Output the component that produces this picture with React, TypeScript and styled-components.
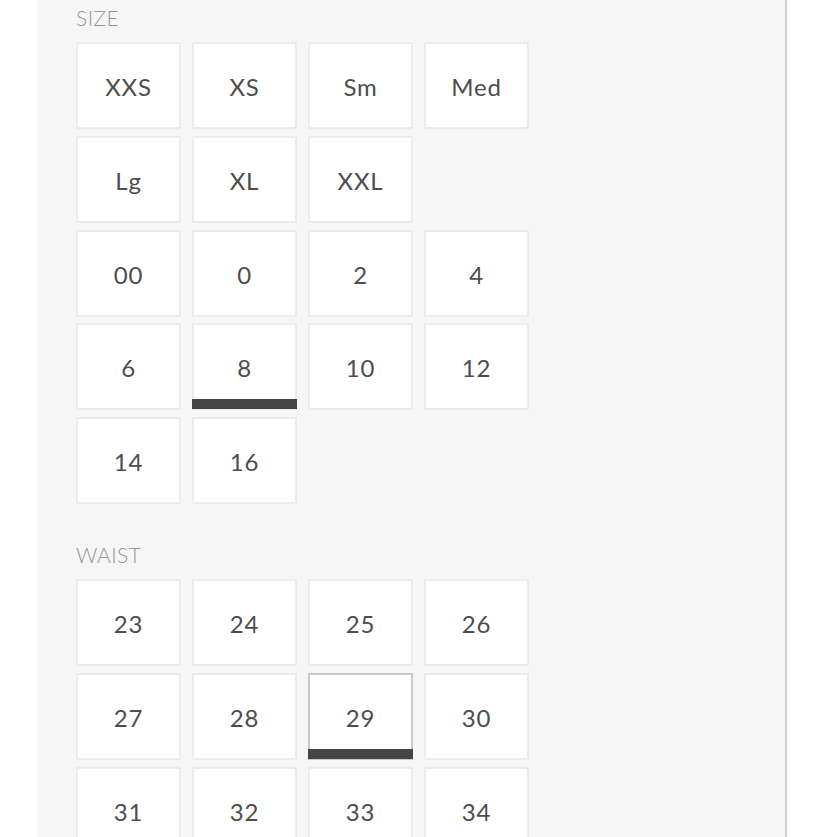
import { createGlobalStyle } from "styled-components";
import styled from "styled-components";

const GlobalStyle = createGlobalStyle`
  html, body {
    margin: 0;
    padding: 0;
    background: #ffffff;
  }
  body {
    font-family: "Lato", "Open Sans", sans-serif;
    overflow: hidden;
  }
`;

type Option = {
  label: string;
  selected?: boolean;
  focused?: boolean;
};

const sizes: Option[] = [
  { label: "XXS" },
  { label: "XS" },
  { label: "Sm" },
  { label: "Med" },
  { label: "Lg" },
  { label: "XL" },
  { label: "XXL" },
  { label: "" },
  { label: "00" },
  { label: "0" },
  { label: "2" },
  { label: "4" },
  { label: "6" },
  { label: "8", selected: true },
  { label: "10" },
  { label: "12" },
  { label: "14" },
  { label: "16" },
];

const waists: Option[] = [
  { label: "23" },
  { label: "24" },
  { label: "25" },
  { label: "26" },
  { label: "27" },
  { label: "28" },
  { label: "29", selected: true, focused: true },
  { label: "30" },
  { label: "31" },
  { label: "32" },
  { label: "33" },
  { label: "34" },
];

const App = () => {
  return (
    <>
      <GlobalStyle />
      <Panel>
        <Section>
          <SectionLabel>Size</SectionLabel>
          <OptionGrid>
            {sizes.map((o, i) =>
              o.label === "" ? (
                <Spacer key={i} />
              ) : (
                <OptionButton key={i} $selected={o.selected} $focused={o.focused}>
                  {o.label}
                </OptionButton>
              )
            )}
          </OptionGrid>
        </Section>
        <Section>
          <SectionLabel>Waist</SectionLabel>
          <OptionGrid>
            {waists.map((o, i) => (
              <OptionButton key={i} $selected={o.selected} $focused={o.focused}>
                {o.label}
              </OptionButton>
            ))}
          </OptionGrid>
        </Section>
      </Panel>
    </>
  );
};

export default App;

const Panel = styled.div`
  margin-left: 37px;
  width: 750px;
  min-height: 837px;
  box-sizing: border-box;
  background: #f6f6f6;
  border-right: 2px solid #cfcfcf;
  padding: 6px 0 0 39px;
  display: flex;
  flex-direction: column;
  gap: 39px;
`;

const Section = styled.div`
  display: flex;
  flex-direction: column;
  gap: 12px;
`;

const SectionLabel = styled.div`
  font-size: 21px;
  line-height: 24px;
  font-weight: 300;
  letter-spacing: 0.4px;
  color: #979797;
  text-transform: uppercase;
`;

const OptionGrid = styled.div`
  display: grid;
  grid-template-columns: repeat(4, 105px);
  grid-auto-rows: 87px;
  column-gap: 11px;
  row-gap: 6.75px;
`;

const Spacer = styled.div``;

const OptionButton = styled.div<{ $selected?: boolean; $focused?: boolean }>`
  position: relative;
  box-sizing: border-box;
  background: #ffffff;
  border: 2px solid ${(p) => (p.$focused ? "#c9c9c9" : "#ebebeb")};
  display: flex;
  align-items: center;
  justify-content: center;
  padding-top: 2px;
  font-size: 24px;
  font-weight: 400;
  letter-spacing: 0.8px;
  color: #4d4d4d;

  &::after {
    content: "";
    display: ${(p) => (p.$selected ? "block" : "none")};
    position: absolute;
    left: -2px;
    right: -2px;
    bottom: -1px;
    height: 10px;
    background: #454545;
  }
`;
